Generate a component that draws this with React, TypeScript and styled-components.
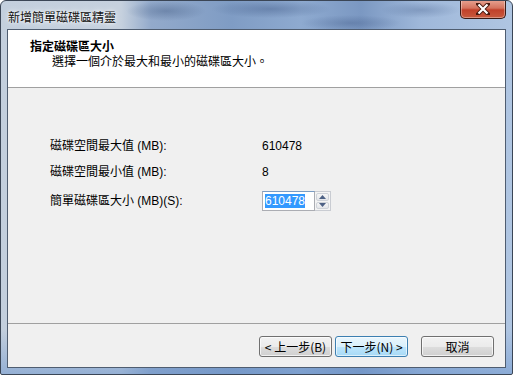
import React from "react";
import styled, { createGlobalStyle } from "styled-components";

const Global = createGlobalStyle`
  html, body { margin: 0; padding: 0; background: #ffffff; }
  body { font-family: "Liberation Sans", "Noto Sans CJK TC", sans-serif; font-size: 12px; color: #000; }
`;

const Window = styled.div`
  position: relative;
  width: 513px;
  height: 375px;
  box-sizing: border-box;
  border: 1px solid #3b4656;
  border-radius: 6px 6px 2px 2px;
  background:
    linear-gradient(to bottom, rgba(255,255,255,0) 88%, rgba(110,150,205,0.55) 100%),
    linear-gradient(to right, #c3cfdd 0px, #c6d1de 120px, #93aacb 150px, #7f9cc4 230px, #8eaad0 300px, #7b98c2 360px, #9fb8da 420px, #b0c6e2 513px);
  display: flex;
  flex-direction: column;
  overflow: hidden;
`;

const TitleBar = styled.div`
  height: 28px;
  display: flex;
  align-items: flex-start;
  justify-content: space-between;
  padding-left: 7px;
  background:
    radial-gradient(ellipse 40px 10px at 165px 10px, rgba(70,95,135,0.45), transparent),
    radial-gradient(ellipse 60px 9px at 270px 8px, rgba(60,85,130,0.4), transparent),
    radial-gradient(ellipse 50px 8px at 350px 22px, rgba(60,85,130,0.35), transparent),
    radial-gradient(ellipse 40px 8px at 420px 9px, rgba(60,85,130,0.3), transparent);
`;

const Title = styled.div`
  padding-top: 9px;
  font-family: "Noto Sans CJK TC", sans-serif;
  font-size: 12px;
  line-height: 14px;
  color: #111;
  text-shadow: 0 0 6px rgba(255,255,255,0.95), 0 0 3px rgba(255,255,255,0.9);
`;

const CloseButton = styled.div`
  width: 46px;
  height: 19px;
  margin-right: 6px;
  margin-top: -1px;
  box-sizing: border-box;
  border: 1px solid #3a1a14;
  border-top: none;
  border-radius: 0 0 5px 5px;
  background: linear-gradient(to bottom, #e8a493 0%, #d4735e 45%, #c1412a 55%, #c85a3e 100%);
  box-shadow: inset 0 0 0 1px rgba(255,255,255,0.35);
  display: flex;
  align-items: center;
  justify-content: center;
`;

const Client = styled.div`
  flex: 1;
  margin: 0 6px 6px 6px;
  border: 1px solid #4f5d70;
  background: #f0f0f0;
  display: flex;
  flex-direction: column;
`;

const Header = styled.div`
  height: 58px;
  background: #ffffff;
  border-bottom: 1px solid #a0a0a0;
  font-family: "Noto Sans CJK TC", sans-serif;
  padding: 9px 0 0 22px;
  box-sizing: border-box;
`;

const HeaderTitle = styled.div`
  font-weight: bold;
  font-size: 12px;
  line-height: 14px;
`;

const HeaderSub = styled.div`
  font-size: 12px;
  line-height: 14px;
  margin-top: 1px;
  padding-left: 22px;
`;

const Body = styled.div`
  flex: 1;
  padding: 48px 0 0 42px;
  display: flex;
  flex-direction: column;
  border-bottom: 1px solid #a0a0a0;
`;

const Row = styled.div<{ $gap: number }>`
  display: grid;
  grid-template-columns: 212px auto;
  align-items: center;
  height: 20px;
  margin-bottom: ${(p) => p.$gap}px;
`;

const Label = styled.div`
  font-family: "Liberation Sans", "Noto Sans CJK TC", sans-serif;
  font-size: 12px;
  line-height: 14px;
`;

const Value = styled.div`
  font-size: 12px;
  line-height: 14px;
`;

const Spin = styled.div`
  display: flex;
  align-items: stretch;
  height: 20px;
`;

const SpinInput = styled.div`
  width: 53px;
  box-sizing: border-box;
  border: 1px solid #abadb3;
  border-top-color: #7a9cc4;
  background: #fff;
  padding: 2px 0 0 2px;
  display: flex;
`;

const Selected = styled.span`
  background: #3399ff;
  color: #fff;
  height: 14px;
  line-height: 14px;
  font-size: 12px;
`;

const SpinButtons = styled.div`
  width: 16px;
  display: flex;
  flex-direction: column;
  border: 1px solid #c9ccd2;
  border-left: none;
  box-sizing: border-box;
  background: #f4f4f4;
  padding: 1px;
  gap: 1px;
`;

const SpinBtn = styled.div`
  flex: 1;
  border: 1px solid #cfd3d9;
  border-radius: 2px;
  background: linear-gradient(to bottom, #f6f6f6, #e4e6ea);
  display: flex;
  align-items: center;
  justify-content: center;
`;

const Footer = styled.div`
  height: 43px;
  display: flex;
  justify-content: flex-end;
  align-items: flex-start;
  padding: 12px 11px 0 0;
  box-sizing: border-box;
`;

const Button = styled.div<{ $focus?: boolean; $gapLeft?: number }>`
  width: 73px;
  height: 21px;
  box-sizing: border-box;
  margin-left: ${(p) => p.$gapLeft ?? 0}px;
  border: 1px solid ${(p) => (p.$focus ? "#3c7fb1" : "#707070")};
  border-radius: 3px;
  background: ${(p) =>
    p.$focus
      ? "linear-gradient(to bottom, #eaf6fd 0%, #d9f0fc 50%, #bee6fd 51%, #a7d9f5 100%)"
      : "linear-gradient(to bottom, #f2f2f2 0%, #ebebeb 50%, #dddddd 51%, #cfcfcf 100%)"};
  box-shadow: inset 0 0 0 1px ${(p) => (p.$focus ? "rgba(255,255,255,0.6)" : "rgba(255,255,255,0.7)")};
  display: flex;
  align-items: center;
  justify-content: center;
  font-family: "Noto Sans CJK TC", sans-serif;
  font-size: 12px;
  line-height: 14px;
`;

const Arrow = ({ up }: { up: boolean }) => (
  <svg width="7" height="4" viewBox="0 0 7 4">
    <path d={up ? "M0 4 L3.5 0 L7 4 Z" : "M0 0 L3.5 4 L7 0 Z"} fill="#4d6185" />
  </svg>
);

export default function App() {
  return (
    <>
      <Global />
      <Window>
        <TitleBar>
          <Title>新增簡單磁碟區精靈</Title>
          <CloseButton>
            <svg width="14" height="12" viewBox="0 0 14 12">
              <path d="M2 1 L12 11 M12 1 L2 11" stroke="#4a1a10" strokeWidth="4" strokeLinecap="square" />
              <path d="M2.5 1.5 L11.5 10.5 M11.5 1.5 L2.5 10.5" stroke="#ffffff" strokeWidth="2.2" />
            </svg>
          </CloseButton>
        </TitleBar>
        <Client>
          <Header>
            <HeaderTitle>指定磁碟區大小</HeaderTitle>
            <HeaderSub>選擇一個介於最大和最小的磁碟區大小。</HeaderSub>
          </Header>
          <Body>
            <Row $gap={6}>
              <Label>磁碟空間最大值 (MB):</Label>
              <Value>610478</Value>
            </Row>
            <Row $gap={9}>
              <Label>磁碟空間最小值 (MB):</Label>
              <Value>8</Value>
            </Row>
            <Row $gap={0}>
              <Label>簡單磁碟區大小 (MB)(S):</Label>
              <Spin>
                <SpinInput>
                  <Selected>610478</Selected>
                </SpinInput>
                <SpinButtons>
                  <SpinBtn><Arrow up /></SpinBtn>
                  <SpinBtn><Arrow up={false} /></SpinBtn>
                </SpinButtons>
              </Spin>
            </Row>
          </Body>
          <Footer>
            <Button>&lt; 上一步(B)</Button>
            <Button $focus $gapLeft={3}>下一步(N) &gt;</Button>
            <Button $gapLeft={13}>取消</Button>
          </Footer>
        </Client>
      </Window>
    </>
  );
}
